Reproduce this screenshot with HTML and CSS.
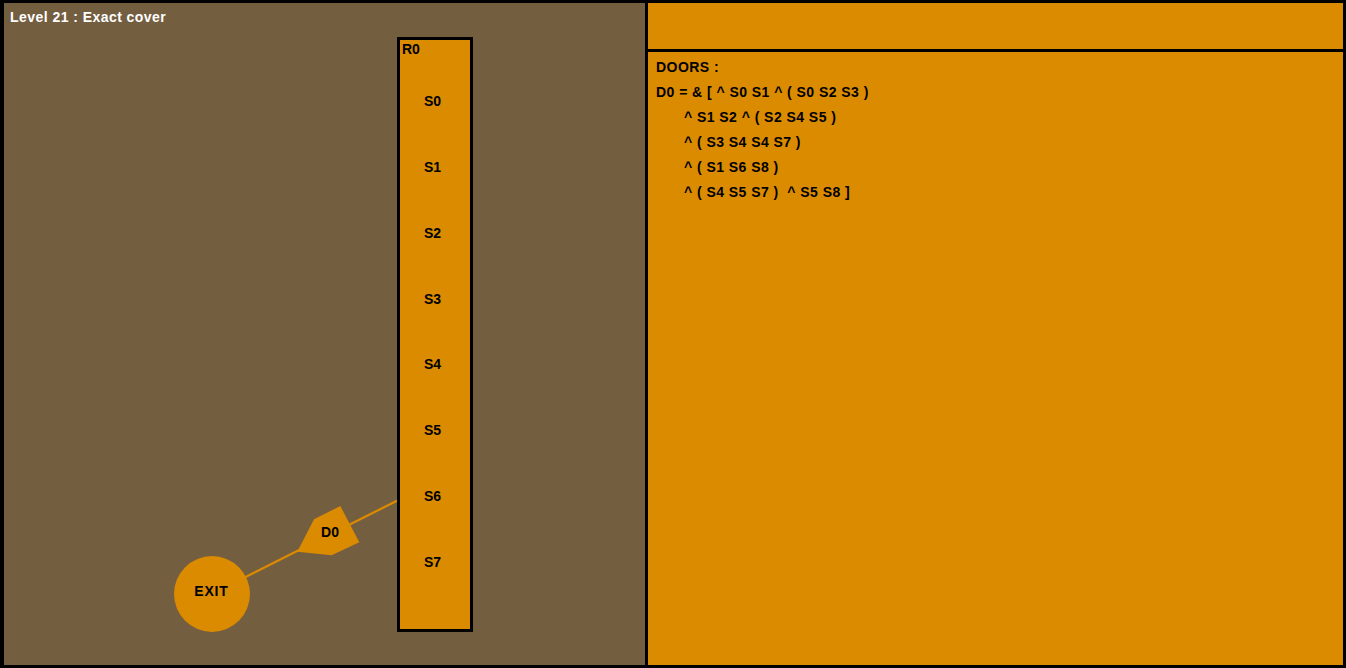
FILE: index.html
```html
<!DOCTYPE html>
<html>
<head>
<meta charset="utf-8">
<link rel="stylesheet" href="styles.css">
</head>
<body>
<div class="frame">
  <div class="stage">
    <div class="title">Level 21 : Exact cover</div>
    <svg class="canvas" viewBox="4 3 641 662" width="641" height="662">
      <line x1="245" y1="577.3" x2="397" y2="500.7" class="link"/>
      <polygon class="door" points="340.3,506 359.3,542.3 331.7,555.3 297.3,551.7 314,519.3"/>
      <text x="330" y="531.5" class="lbl">D0</text>
      <circle cx="212" cy="594" r="38" class="exit"/>
      <text x="211.5" y="590.5" class="lbl exit-lbl">EXIT</text>
      <rect x="398.5" y="38.5" width="73" height="592" class="room"/>
      <text x="402" y="48.5" class="lbl start">R0</text>
      <text x="432.5" y="101" class="lbl">S0</text>
      <text x="432.5" y="167" class="lbl">S1</text>
      <text x="432.5" y="233" class="lbl">S2</text>
      <text x="432.5" y="299" class="lbl">S3</text>
      <text x="432.5" y="364" class="lbl">S4</text>
      <text x="432.5" y="430" class="lbl">S5</text>
      <text x="432.5" y="496" class="lbl">S6</text>
      <text x="432.5" y="562" class="lbl">S7</text>
    </svg>
  </div>
  <div class="side">
    <div class="side-top"></div>
    <div class="doors">
      <div class="line">DOORS :</div>
      <div class="line">D0 = &amp; [ ^ S0 S1 ^ ( S0 S2 S3 )</div>
      <div class="line indent">^ S1 S2 ^ ( S2 S4 S5 )</div>
      <div class="line indent">^ ( S3 S4 S4 S7 )</div>
      <div class="line indent">^ ( S1 S6 S8 )</div>
      <div class="line indent">^ ( S4 S5 S7 )  ^ S5 S8 ]</div>
    </div>
  </div>
</div>
</body>
</html>
```
FILE: styles.css
```css
html, body {
  margin: 0;
  padding: 0;
  background: #000;
}
body {
  width: 1346px;
  height: 668px;
  overflow: hidden;
  font-family: "Liberation Sans", Arial, sans-serif;
  font-weight: bold;
  font-size: 14px;
  letter-spacing: 0.45px;
}
.frame {
  display: flex;
  gap: 3px;
  padding: 3px 3px 3px 4px;
  height: 668px;
  box-sizing: border-box;
}
.stage {
  position: relative;
  width: 641px;
  height: 662px;
  background: #745e40;
  flex: none;
}
.title {
  position: relative;
  z-index: 1;
  color: #fff;
  padding: 6px 0 0 6px;
  line-height: 17px;
}
.canvas {
  position: absolute;
  left: 0;
  top: 0;
}
.link {
  stroke: #db8b00;
  stroke-width: 2.2;
}
.door, .exit {
  fill: #db8b00;
}
.room {
  fill: #db8b00;
  stroke: #000;
  stroke-width: 3;
}
.lbl {
  font-family: "Liberation Sans", Arial, sans-serif;
  font-weight: bold;
  font-size: 14px;
  letter-spacing: 0;
  fill: #000;
  text-anchor: middle;
  dominant-baseline: central;
}
.start {
  text-anchor: start;
}
.exit-lbl {
  letter-spacing: 0.8px;
}
.side {
  width: 695px;
  flex: none;
  display: flex;
  flex-direction: column;
  gap: 3px;
}
.side-top {
  height: 46px;
  background: #db8b00;
  flex: none;
}
.doors {
  flex: 1;
  background: #db8b00;
  padding: 3px 0 0 8px;
  color: #000;
}
.line {
  line-height: 25px;
  white-space: pre;
}
.indent {
  padding-left: 28px;
}
```
